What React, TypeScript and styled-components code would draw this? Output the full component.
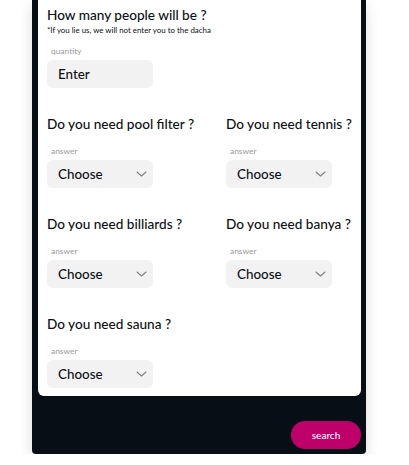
import React from "react";
import styled, { createGlobalStyle } from "styled-components";

const Global = createGlobalStyle`
  html, body { margin: 0; padding: 0; background: #ffffff; }
  body { font-family: Lato, "Noto Sans", sans-serif; color: #111418; }
`;

const Panel = styled.div`
  width: 334px;
  margin-left: 32px;
  box-sizing: border-box;
  background: #070e15;
  border-radius: 0 0 4px 4px;
  padding: 0 5px 5px 6px;
  box-shadow: 0 6px 14px rgba(0, 0, 0, 0.14);
`;

const Card = styled.div`
  background: #ffffff;
  border-radius: 0 0 6px 6px;
  padding: 6px 9px 8px 9px;
  display: grid;
  grid-template-columns: 179px 1fr;
  row-gap: 27px;
`;

const Section = styled.div<{ $wide?: boolean }>`
  grid-column: ${(p) => (p.$wide ? "1 / -1" : "auto")};
  display: flex;
  flex-direction: column;
  align-items: flex-start;
`;

const Heading = styled.h2`
  margin: 0;
  font-size: 13.6px;
  line-height: 18px;
  font-weight: 500;
  white-space: nowrap;
  color: #0d1014;
`;

const Note = styled.p`
  margin: 1px 0 0;
  font-size: 7.9px;
  line-height: 10px;
  white-space: nowrap;
  color: #0d1014;
`;

const Label = styled.span<{ $top: number }>`
  margin-top: ${(p) => p.$top}px;
  margin-left: 4px;
  font-size: 8.4px;
  line-height: 9px;
  color: #9a9a9a;
`;

const Box = styled.div`
  margin-top: 4px;
  width: 106px;
  height: 28px;
  box-sizing: border-box;
  border-radius: 6px;
  background: #f2f2f2;
  padding: 0 6px 0 11px;
  display: flex;
  align-items: center;
  justify-content: space-between;
  font-size: 13.4px;
  font-weight: 500;
  color: #0d1014;
`;

const Chevron = () => (
  <svg width="11" height="6" viewBox="0 0 11 6" fill="none">
    <path d="M1 1l4.5 4L10 1" stroke="#808080" strokeWidth="1.1" strokeLinecap="round" strokeLinejoin="round" />
  </svg>
);

const Footer = styled.div`
  display: flex;
  justify-content: flex-end;
  padding-top: 25px;
`;

const SearchButton = styled.button`
  width: 70px;
  height: 28px;
  border: none;
  border-radius: 14px;
  background: #bf006a;
  color: #ffffff;
  font-family: inherit;
  font-size: 10px;
  font-weight: 500;
  cursor: pointer;
`;

const Question = ({ title }: { title: string }) => (
  <Section>
    <Heading>{title}</Heading>
    <Label $top={14}>answer</Label>
    <Box>
      Choose
      <Chevron />
    </Box>
  </Section>
);

export default function App() {
  return (
    <>
      <Global />
      <Panel>
        <Card>
          <Section $wide>
            <Heading>How many people will be ?</Heading>
            <Note>*If you lie us, we will not enter you to the dacha</Note>
            <Label $top={12}>quantity</Label>
            <Box>Enter</Box>
          </Section>
          <Question title="Do you need pool filter ?" />
          <Question title="Do you need tennis ?" />
          <Question title="Do you need billiards ?" />
          <Question title="Do you need banya ?" />
          <Question title="Do you need sauna ?" />
        </Card>
        <Footer>
          <SearchButton>search</SearchButton>
        </Footer>
      </Panel>
    </>
  );
}
